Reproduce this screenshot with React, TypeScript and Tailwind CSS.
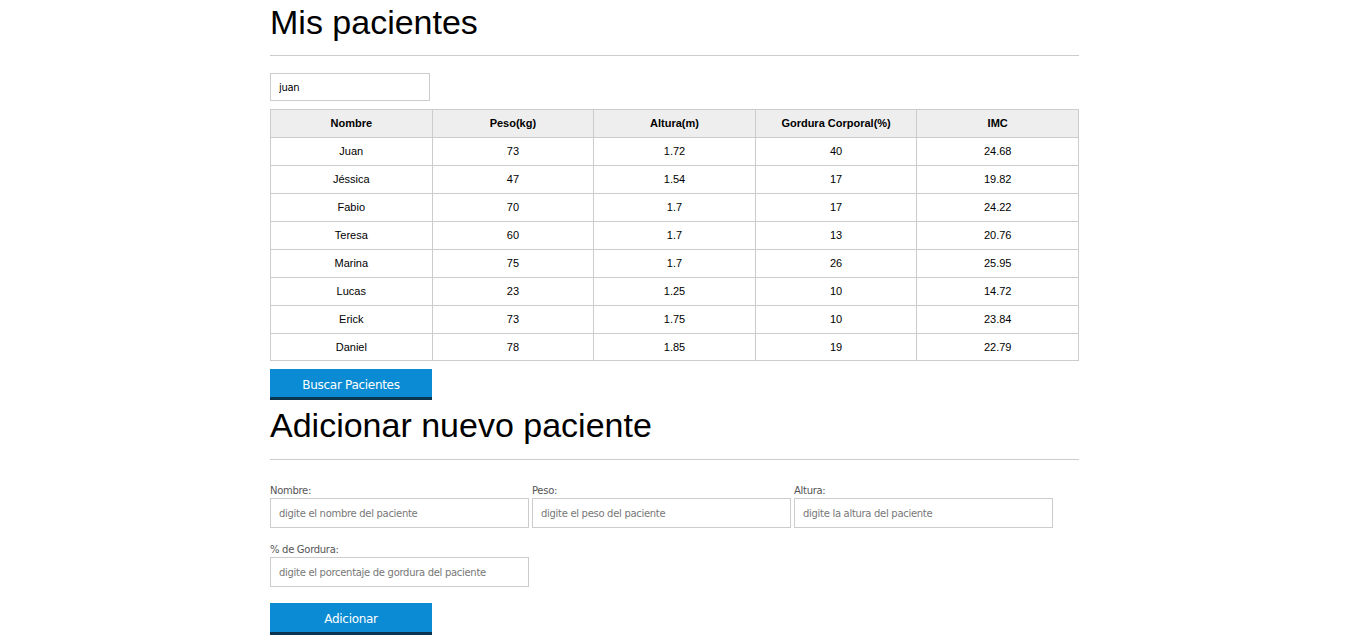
import React, { useState } from 'react';

const pacientes = [
  { nombre: 'Juan', peso: '73', altura: '1.72', gordura: '40', imc: '24.68' },
  { nombre: 'Jéssica', peso: '47', altura: '1.54', gordura: '17', imc: '19.82' },
  { nombre: 'Fabio', peso: '70', altura: '1.7', gordura: '17', imc: '24.22' },
  { nombre: 'Teresa', peso: '60', altura: '1.7', gordura: '13', imc: '20.76' },
  { nombre: 'Marina', peso: '75', altura: '1.7', gordura: '26', imc: '25.95' },
  { nombre: 'Lucas', peso: '23', altura: '1.25', gordura: '10', imc: '14.72' },
  { nombre: 'Erick', peso: '73', altura: '1.75', gordura: '10', imc: '23.84' },
  { nombre: 'Daniel', peso: '78', altura: '1.85', gordura: '19', imc: '22.79' },
];

const headers = ['Nombre', 'Peso(kg)', 'Altura(m)', 'Gordura Corporal(%)', 'IMC'];

const Campo: React.FC<{ label: string; placeholder: string }> = ({ label, placeholder }) => (
  <div className="flex flex-col">
    <label className="text-[10px] leading-[14px] text-[#555] font-['DejaVu_Sans',sans-serif] tracking-[-0.3px]">{label}</label>
    <input
      className="w-[259px] h-[30px] border border-[#ccc] px-2 text-[10px] font-['DejaVu_Sans',sans-serif] tracking-[-0.3px] placeholder:text-[#777] outline-none"
      placeholder={placeholder}
    />
  </div>
);

const App: React.FC = () => {
  const [filtro, setFiltro] = useState('juan');

  return (
    <div className="w-[809px] ml-[270px] bg-white text-black font-['Liberation_Sans',Arial,sans-serif]">
      <h1 className="text-[34px] leading-[44px]">Mis pacientes</h1>
      <hr className="mt-[11px] border-t border-[#ccc]" />

      <input
        value={filtro}
        onChange={e => setFiltro(e.target.value)}
        className="mt-[17px] w-[160px] h-[28px] border border-[#ccc] px-2 text-[10px] font-['DejaVu_Sans',sans-serif] tracking-[-0.3px] outline-none"
      />

      <table className="mt-[8px] w-full border-collapse table-fixed text-[11px]">
        <thead>
          <tr className="bg-[#eee]">
            {headers.map(h => (
              <th key={h} className="h-[28px] border border-[#ccc] font-bold text-center">{h}</th>
            ))}
          </tr>
        </thead>
        <tbody>
          {pacientes.map((p, i) => (
            <tr key={p.nombre} className={i === pacientes.length - 1 ? 'h-[27px]' : 'h-[28px]'}>
              <td className="border border-[#ccc] text-center">{p.nombre}</td>
              <td className="border border-[#ccc] text-center">{p.peso}</td>
              <td className="border border-[#ccc] text-center">{p.altura}</td>
              <td className="border border-[#ccc] text-center">{p.gordura}</td>
              <td className="border border-[#ccc] text-center">{p.imc}</td>
            </tr>
          ))}
        </tbody>
      </table>

      <button className="mt-[8px] w-[162px] h-[31px] pt-[3px] bg-[#0b8bd3] border-b-[3px] border-[#0a3550] text-white text-[12px] font-['DejaVu_Sans',sans-serif] tracking-[-0.3px]">
        Buscar Pacientes
      </button>

      <h2 className="mt-[3px] text-[34px] leading-[44px]">Adicionar nuevo paciente</h2>
      <hr className="mt-[12px] border-t border-[#ccc]" />

      <form className="mt-[24px]" onSubmit={e => e.preventDefault()}>
        <div className="flex gap-[3px]">
          <Campo label="Nombre:" placeholder="digite el nombre del paciente" />
          <Campo label="Peso:" placeholder="digite el peso del paciente" />
          <Campo label="Altura:" placeholder="digite la altura del paciente" />
        </div>
        <div className="mt-[15px] flex">
          <Campo label="% de Gordura:" placeholder="digite el porcentaje de gordura del paciente" />
        </div>
        <button className="mt-[16px] w-[162px] h-[32px] pt-[2px] bg-[#0b8bd3] border-b-[3px] border-[#0a3550] text-white text-[12px] font-['DejaVu_Sans',sans-serif] tracking-[-0.3px]">
          Adicionar
        </button>
      </form>
    </div>
  );
};

export default App;
